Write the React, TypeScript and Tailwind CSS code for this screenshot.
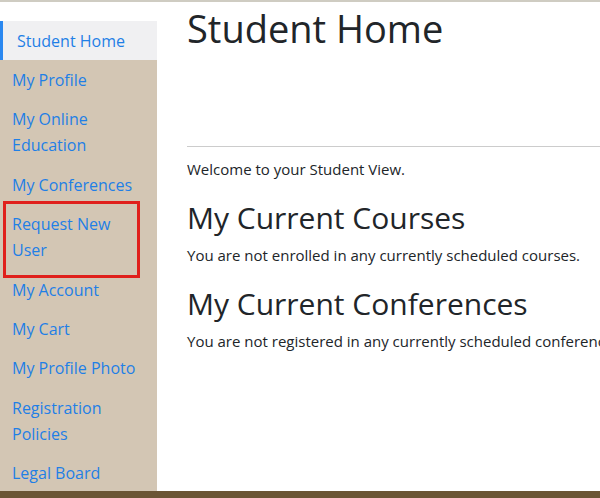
const links: { label: string; active?: boolean; flagged?: boolean }[] = [
  { label: "Student Home", active: true },
  { label: "My Profile" },
  { label: "My Online Education" },
  { label: "My Conferences" },
  { label: "Request New User", flagged: true },
  { label: "My Account" },
  { label: "My Cart" },
  { label: "My Profile Photo" },
  { label: "Registration Policies" },
  { label: "Legal Board" },
];

export default function App() {
  return (
    <div
      className="flex h-[498px] w-[600px] flex-col overflow-hidden bg-white text-[#212529]"
      style={{ fontFamily: '"Open Sans", "Noto Sans", sans-serif' }}
    >
      <div className="h-[2px] shrink-0 bg-[#cfccc2]" />
      <div className="flex min-h-0 flex-1">
        <aside className="flex w-[157px] shrink-0 flex-col pt-[19px]">
          <nav className="flex flex-1 flex-col bg-[#d3c6b4] text-[16px] leading-[26px] text-[#1f7fe6]">
            {links.map((l) => (
              <a
                key={l.label}
                href="#"
                className={
                  l.active
                    ? "block border-l-[3px] border-[#2b88f0] bg-[#f0f0f2] py-[6.7px] pl-[14px] pr-3"
                    : "relative block py-[6.7px] pl-3 pr-3"
                }
              >
                {l.label}
                {l.flagged && (
                  <span className="pointer-events-none absolute left-[3px] top-[-4px] h-[77px] w-[137px] border-[3px] border-[#e0201c]" />
                )}
              </a>
            ))}
          </nav>
        </aside>
        <main className="min-w-0 flex-1 overflow-hidden pl-[30px]">
          <h1 className="h-[144px] pt-[3px] text-[38px] font-normal leading-[46px]">Student Home</h1>
          <hr className="border-t border-[#cccccc]" />
          <p className="mt-[11px] whitespace-nowrap text-[15px] leading-[22px]">
            Welcome to your Student View.
          </p>
          <h2 className="mb-2 mt-[20px] text-[30px] leading-[36px]">My Current Courses</h2>
          <p className="whitespace-nowrap text-[15px] leading-[22px]">
            You are not enrolled in any currently scheduled courses.
          </p>
          <h2 className="mb-2 mt-[20px] text-[30px] leading-[36px]">My Current Conferences</h2>
          <p className="whitespace-nowrap text-[15px] leading-[22px]">
            You are not registered in any currently scheduled conferences.
          </p>
        </main>
      </div>
      <div className="h-[7px] shrink-0 bg-[#6b5535]" />
    </div>
  );
}
